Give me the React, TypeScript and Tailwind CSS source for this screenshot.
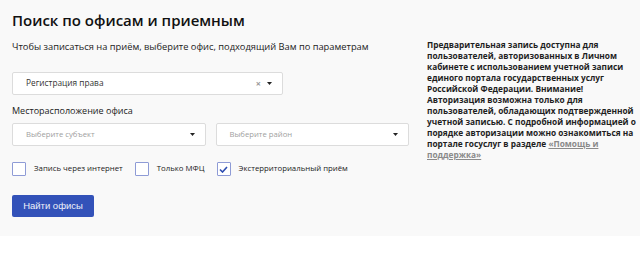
import React, { useState } from 'react';

const Caret = () => (
  <svg width="5" height="3" viewBox="0 0 5 3" className="text-[#222]">
    <path d="M0 0h5L2.5 3z" fill="currentColor" />
  </svg>
);

const Select: React.FC<{ value?: string; placeholder?: string; clearable?: boolean; className?: string }> = ({
  value,
  placeholder,
  clearable,
  className = '',
}) => (
  <div
    className={`h-[23px] bg-white border border-[#dcdcdc] rounded-[2px] flex items-center pl-[13px] pr-[10px] ${className}`}
  >
    <span className={`flex-1 ${value ? 'text-[8.3px] text-[#333]' : 'text-[7.7px] text-[#a0a0a0]'}`}>
      {value || placeholder}
    </span>
    {clearable && <span className="text-[9px] font-bold text-[#999] mr-[6px] leading-none">×</span>}
    <Caret />
  </div>
);

const Checkbox: React.FC<{ label: string; checked?: boolean }> = ({ label, checked }) => (
  <label className="flex items-center gap-[8px] cursor-pointer">
    <span className="w-[14px] h-[14px] border border-[#8e9bd6] rounded-[1px] bg-white flex items-center justify-center">
      {checked && (
        <svg width="9" height="7" viewBox="0 0 9 7">
          <path d="M1 3.5L3.5 6L8 1" stroke="#2d4db0" strokeWidth="1.6" fill="none" />
        </svg>
      )}
    </span>
    <span className="text-[7.8px] text-[#222]">{label}</span>
  </label>
);

export default function App() {
  const [extra] = useState(true);

  return (
    <div className="w-[640px] h-[257px] bg-white" style={{ fontFamily: '"Open Sans", sans-serif' }}>
      <div className="bg-[#f9f9f9] h-[236px] flex pl-[12px]">
        <div className="w-[397px] shrink-0 flex flex-col">
          <h1 className="text-[15px] font-semibold text-[#111] leading-[20px] mt-[10px]">Поиск по офисам и приемным</h1>
          <p className="text-[9.3px] text-[#222] mt-[10px] leading-[14px]">
            Чтобы записаться на приём, выберите офис, подходящий Вам по параметрам
          </p>
          <Select value="Регистрация права" clearable className="w-[271px] mt-[18px]" />
          <div className="text-[9px] text-[#222] mt-[9px] leading-[14px]">Месторасположение офиса</div>
          <div className="flex gap-[10px] mt-[5px]">
            <Select placeholder="Выберите субъект" className="flex-1" />
            <Select placeholder="Выберите район" className="flex-1" />
          </div>
          <div className="flex items-center gap-[12px] mt-[16px]">
            <Checkbox label="Запись через интернет" />
            <Checkbox label="Только МФЦ" />
            <Checkbox label="Экстерриториальный приём" checked={extra} />
          </div>
          <button
            className="mt-[19px] w-[82px] h-[22px] bg-[#3352b9] rounded-[2px] text-[#eef1fa] text-[9.5px] self-start"
            style={{ fontFamily: '"Liberation Sans", Arial, sans-serif' }}
          >
            Найти офисы
          </button>
        </div>
        <div className="w-[213px] shrink-0 ml-[18px] mt-[39px] text-[8.3px] font-bold leading-[11px] text-[#1e1e1e]">
          Предварительная запись доступна для пользователей, авторизованных в Личном кабинете с использованием учетной
          записи единого портала государственных услуг Российской Федерации. Внимание! Авторизация возможна только для
          пользователей, обладающих подтвержденной учетной записью. С подробной информацией о порядке авторизации можно
          ознакомиться на портале госуслуг в разделе{' '}
          <a className="text-[#8a8a8a] underline">«Помощь и поддержка»</a>
        </div>
      </div>
    </div>
  );
}
